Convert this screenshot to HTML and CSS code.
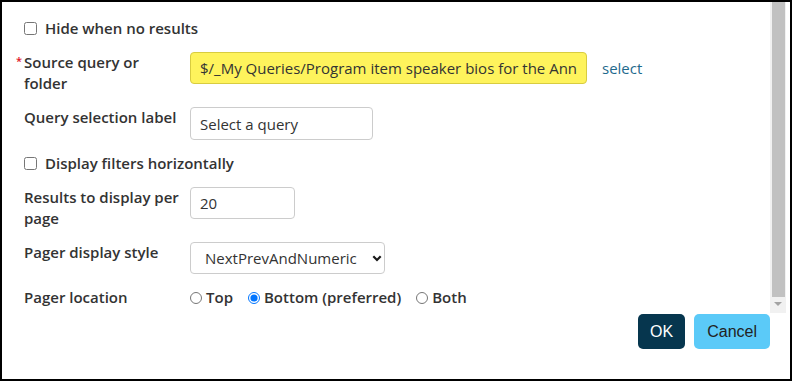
FILE: index.html
```html
<!DOCTYPE html>
<html lang="en">
<head>
    <meta charset="UTF-8">
    <meta name="viewport" content="width=device-width, initial-scale=1.0">
    <title>Query Results Settings</title>
    <link rel="stylesheet" href="styles.css">
</head>
<body>
    <div class="dialog">
        <div class="dialog-body">
            <form class="settings">
                <label class="check-row"><input type="checkbox"> Hide when no results</label>

                <label class="field-label"><span class="req">*</span>Source query or folder</label>
                <div class="field">
                    <input type="text" class="text-input query-path" value="$/_My Queries/Program item speaker bios for the Annual Meeting">
                    <a href="#" class="link">select</a>
                </div>

                <label class="field-label">Query selection label</label>
                <div class="field">
                    <input type="text" class="text-input query-label" value="Select a query">
                </div>

                <label class="check-row"><input type="checkbox"> Display filters horizontally</label>

                <label class="field-label">Results to display per page</label>
                <div class="field">
                    <input type="text" class="text-input page-size" value="20">
                </div>

                <label class="field-label">Pager display style</label>
                <div class="field">
                    <div class="select-wrap">
                        <select class="pager-style">
                            <option>NextPrevAndNumeric</option>
                            <option>NextPrev</option>
                            <option>Numeric</option>
                        </select>
                        <svg class="chevron" width="10" height="7" viewBox="0 0 10 7"><path d="M1.3 1.3 L5 5 L8.7 1.3" fill="none" stroke="#1a1a1a" stroke-width="2.2"/></svg>
                    </div>
                </div>

                <label class="field-label">Pager location</label>
                <div class="radio-group">
                    <label class="radio-option"><input type="radio" name="pager"> Top</label>
                    <label class="radio-option"><input type="radio" name="pager" checked> Bottom (preferred)</label>
                    <label class="radio-option"><input type="radio" name="pager"> Both</label>
                </div>
            </form>
            <div class="scrollbar">
                <div class="thumb"></div>
                <div class="arrow"></div>
            </div>
        </div>
        <div class="dialog-footer">
            <button class="btn btn-ok">OK</button>
            <button class="btn btn-cancel">Cancel</button>
        </div>
    </div>
</body>
</html>
```

FILE: styles.css
```css
body {
    margin: 0;
    font-family: "Open Sans", sans-serif;
    color: #333;
    background: #fff;
}
.dialog {
    width: 792px;
    height: 381px;
    box-sizing: border-box;
    border: 2px solid #000;
    display: flex;
    flex-direction: column;
}
.dialog-body {
    display: flex;
    height: 311px;
}
.settings {
    flex: 1;
    display: grid;
    grid-template-columns: 156px 1fr;
    column-gap: 10px;
    row-gap: 13px;
    align-items: start;
    align-content: start;
    padding: 16px 0 0 22px;
    font-size: 15px;
    line-height: 21px;
    font-weight: 600;
    overflow: hidden;
}
.check-row {
    grid-column: 1 / -1;
    display: flex;
    align-items: center;
}
.check-row input {
    width: 13px;
    height: 13px;
    margin: 0 8px 0 0;
}
.field-label {
    position: relative;
}
.req {
    position: absolute;
    left: -8px;
    top: -2px;
    color: #e0141e;
    font-size: 11px;
}
.field {
    display: flex;
    align-items: center;
}
.text-input, .pager-style {
    height: 32px;
    box-sizing: border-box;
    border: 1px solid #ccc;
    border-radius: 4px;
    padding: 0 9px;
    font-family: "Open Sans", sans-serif;
    font-size: 15px;
    color: #333;
    background: #fff;
}
.query-path {
    width: 397px;
    background: #fef35c;
    border-color: #d8cc40;
}
.query-label {
    width: 183px;
    height: 33px;
}
.page-size {
    width: 105px;
}
.link {
    margin-left: 15px;
    color: #1f6a8d;
    font-weight: 400;
    text-decoration: none;
}
.select-wrap {
    position: relative;
}
.pager-style {
    width: 195px;
    padding: 0 18px 0 14px;
    appearance: none;
}
.chevron {
    position: absolute;
    right: 3px;
    top: 13px;
    pointer-events: none;
}
.radio-group {
    display: flex;
    align-items: center;
}
.radio-option {
    display: flex;
    align-items: center;
    margin-right: 15px;
}
.radio-option input {
    width: 12px;
    height: 12px;
    margin: 0 4px 0 0;
}
.scrollbar {
    width: 16px;
    margin-right: 4px;
    background: #f1f1f1;
    display: flex;
    flex-direction: column;
    align-items: center;
}
.thumb {
    width: 13px;
    height: 295px;
    margin-left: 1px;
    background: #c1c1c1;
}
.arrow {
    margin-top: 5px;
    width: 0;
    height: 0;
    border-left: 4px solid transparent;
    border-right: 4px solid transparent;
    border-top: 4px solid #a3a3a3;
}
.dialog-footer {
    display: flex;
    justify-content: flex-end;
    gap: 9px;
    padding: 1px 20px 0 0;
}
.btn {
    height: 35px;
    padding: 0 12px;
    border: none;
    border-radius: 5px;
    font-family: "Liberation Sans", Arial, sans-serif;
    font-size: 16px;
    cursor: pointer;
}
.btn-ok {
    background: #06364e;
    color: #fff;
}
.btn-cancel {
    padding: 0 13px;
    background: #5bcaf8;
    color: #222;
}
```
